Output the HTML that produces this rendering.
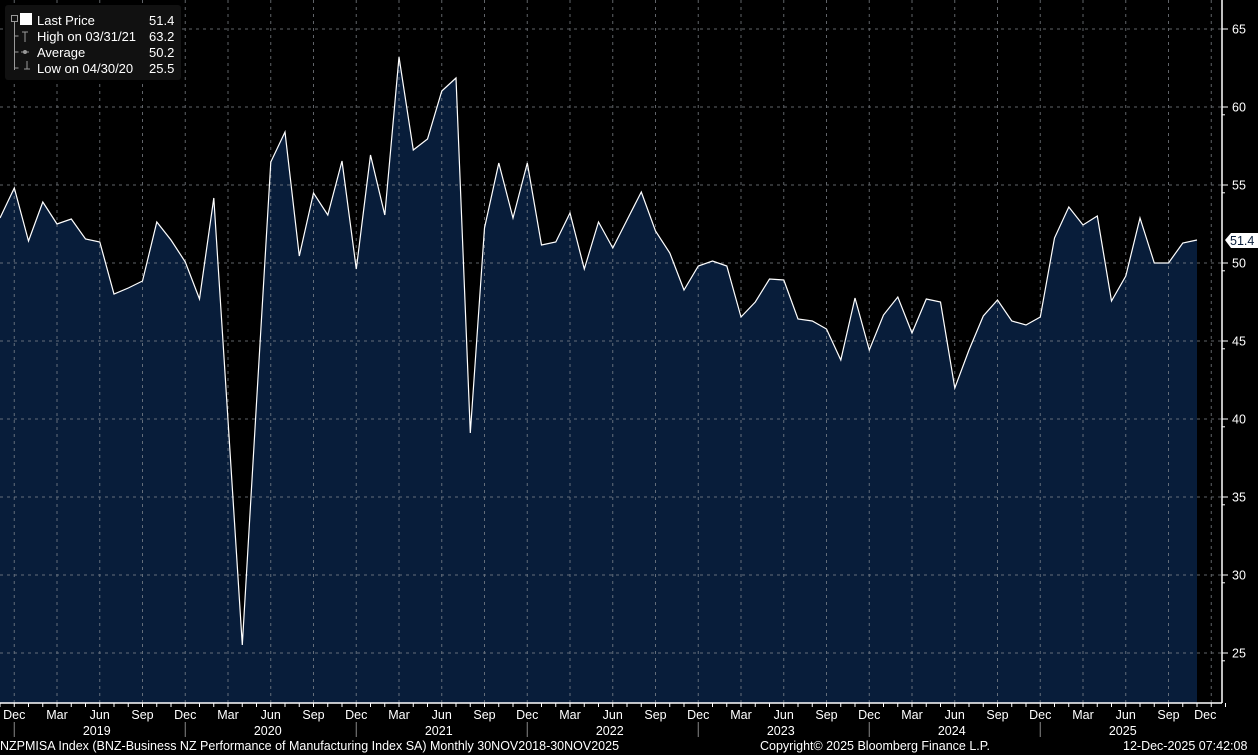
<!DOCTYPE html>
<html><head><meta charset="utf-8"><style>
html,body{margin:0;padding:0;background:#000;width:1258px;height:755px;overflow:hidden;font-family:"Liberation Sans",sans-serif}
svg{display:block}
text{font-family:"Liberation Sans",sans-serif}
</style></head><body>
<svg id="s" width="1258" height="755" xmlns="http://www.w3.org/2000/svg">
<rect width="1258" height="755" fill="#000"/>
<g id="fill"></g>
<g id="grid" stroke="#8a8f96" stroke-width="1" stroke-dasharray="3,4" opacity="0.7"></g>
<g id="line"></g>
<line x1="1222" y1="0" x2="1222" y2="703" stroke="#fff" stroke-width="1.5"/>
<line x1="0" y1="703" x2="1222" y2="703" stroke="#fff" stroke-width="1.5"/>
<g id="ticks" stroke="#fff" stroke-width="1"></g>
<g id="labels" fill="#fff" font-size="12.5"></g>
<rect x="5" y="5" width="176" height="75" rx="3" fill="#111"/>
<g fill="#fff" font-size="13">
<rect x="20" y="13" width="12" height="12" fill="#fff"/>
<text x="37" y="25">Last Price</text><text x="149" y="25">51.4</text>
<text x="37" y="41">High on 03/31/21</text><text x="149" y="41">63.2</text>
<text x="37" y="57">Average</text><text x="149" y="57">50.2</text>
<text x="37" y="73">Low on 04/30/20</text><text x="149" y="73">25.5</text>
</g>
<g stroke="#999" stroke-width="1" fill="none">
<rect x="11.5" y="15.5" width="6" height="6"/>
<path d="M14.5 22V70M14.5 36h4M14.5 52h4M14.5 68h4"/>
<path d="M22 32h6M25 32v10M21 52h8M24 69h6M27 61v8"/>
<circle cx="25" cy="52" r="1.5" fill="#999"/>
</g>
<polygon points="1225,240 1231,233 1258,233 1258,248 1231,248" fill="#fff"/>
<text x="1230" y="245" font-size="12.5" fill="#0a1f3c">51.4</text>
<g font-size="12.5" fill="#fff">
<text x="0" y="750">NZPMISA Index (BNZ-Business NZ Performance of Manufacturing Index SA) Monthly 30NOV2018-30NOV2025</text>
<text x="760" y="750">Copyright© 2025 Bloomberg Finance L.P.</text>
<text x="1123" y="750">12-Dec-2025 07:42:08</text>
</g>
</svg>
<script>
var ys=[218,188,241,202,224,219,239,242,294,288,281,222,240,262,299,198,420,645,403,162,132,256,193,215,161,269,155,215,57,150,139,91,78,433,228,163,218,163,245,242,213,269,222,248,220,192,231,253,290,266,261,266,317,302,279,280,319,321,329,360,298,350,315,297,333,299,302,388,350,316,300,321,325,317,238,207,225,216,301,276,218,263,263,243,240];
var dx=14.25,ns="http://www.w3.org/2000/svg";
function el(t,a,p,txt){var e=document.createElementNS(ns,t);for(var k in a)e.setAttribute(k,a[k]);if(txt)e.textContent=txt;document.getElementById(p).appendChild(e);return e}
var pts=ys.map(function(y,i){return (i*dx).toFixed(1)+','+y}).join(' ');
el('polygon',{points:'0,703 '+pts+' '+(84*dx)+',703',fill:'#081d3a'},'fill');
el('polyline',{points:pts,fill:'none',stroke:'#fff','stroke-width':1.2},'line');
for(var v=25;v<=65;v+=5){var y=29+(65-v)*15.6;
el('line',{x1:0,y1:y,x2:1222,y2:y},'grid');
el('line',{x1:1222,y1:y,x2:1228,y2:y},'ticks');
el('text',{x:1232,y:y+4.5},'labels',String(v));
if(v<65){el('line',{x1:1222,y1:y+7.8,x2:1225,y2:y+7.8},'ticks');}}
var mn=['Dec','Mar','Jun','Sep'];
for(var i=0;i<=86;i++){var x=i*dx;
el('line',{x1:x,y1:703,x2:x,y2:707},'ticks');
if((i-1)%3==0){el('line',{x1:x,y1:0,x2:x,y2:703},'grid');
var q=((i-1)/3)%4;el('text',{x:(i==85?x-6:x),y:719,'text-anchor':'middle'},'labels',mn[q]);
if(q==0&&i<85){el('line',{x1:x,y1:722,x2:x,y2:737,stroke:'#888'},'ticks');}}}
var yrs=[2019,2020,2021,2022,2023,2024,2025];
yrs.forEach(function(yr,k){var x=(1+12*k+6)*dx-3;el('text',{x:x,y:735,'text-anchor':'middle'},'labels',String(yr));});
</script>
</body></html>
